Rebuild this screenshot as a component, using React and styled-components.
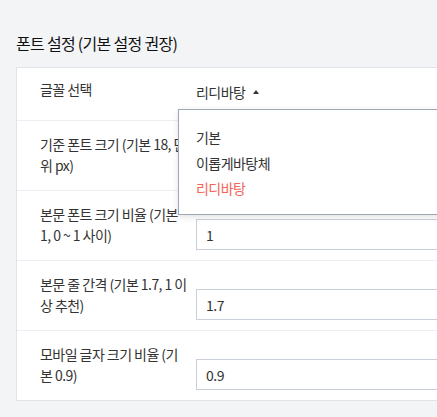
import styled, { createGlobalStyle } from "styled-components";

const GlobalStyle = createGlobalStyle`
  html, body {
    margin: 0;
    padding: 0;
    overflow: hidden;
    background: #f3f4f6;
  }
  body {
    font-family: "Noto Sans CJK KR", "Noto Sans", sans-serif;
    color: #333;
  }
`;

const Page = styled.div`
  padding: 31px 0 0 16px;
  min-height: 417px;
  box-sizing: border-box;
`;

const Title = styled.h2`
  margin: 0 0 12px;
  font-size: 16px;
  line-height: 24px;
  font-weight: 400;
  letter-spacing: -0.7px;
  color: #111;
`;

const Card = styled.div`
  width: 640px;
  background: #fff;
  border: 1px solid #dfe3ea;
`;

const Row = styled.div`
  display: grid;
  grid-template-columns: 150px 1fr;
  column-gap: 6px;
  align-items: start;
  padding: ${(p) => (p.$single ? "11px 0 17px 23px" : "13px 0 10px 23px")};
  border-bottom: 1px solid #eceff3;

  &:last-child {
    border-bottom: none;
  }
`;

const Label = styled.div`
  font-size: 14px;
  line-height: 20.5px;
  letter-spacing: -0.55px;
  word-break: break-all;
  color: #333;
`;

const SelectWrap = styled.div`
  position: relative;
`;

const Trigger = styled.div`
  display: inline-flex;
  align-items: center;
  gap: 8px;
  font-size: 14px;
  line-height: 22px;
  letter-spacing: -0.55px;
  color: #333;
  cursor: pointer;
`;

const Caret = styled.span`
  width: 0;
  height: 0;
  border-left: 3.5px solid transparent;
  border-right: 3.5px solid transparent;
  border-bottom: 4px solid #333;
`;

const Menu = styled.ul`
  position: absolute;
  top: calc(100% + 6px);
  left: -18px;
  width: 320px;
  margin: 0;
  padding: 15px 0 12px;
  list-style: none;
  background: #fff;
  border: 1px solid #9ea7b4;
  box-shadow: 0 2px 6px rgba(0, 0, 0, 0.12);
  z-index: 10;
`;

const Option = styled.li`
  padding-left: 17px;
  font-size: 14px;
  line-height: 25.5px;
  letter-spacing: -0.55px;
  color: ${(p) => (p.$active ? "#f2655a" : "#333")};
`;

const Input = styled.input`
  display: block;
  box-sizing: border-box;
  width: 100%;
  height: 31px;
  margin-top: 15px;
  padding: 0 9px;
  border: 1px solid #c9d0da;
  font-family: inherit;
  font-size: 14px;
  letter-spacing: -0.5px;
  color: #333;
  background: #fff;
  outline: none;
`;

const fonts = ["기본", "이롭게바탕체", "리디바탕"];

const fields = [
  { label: "기준 폰트 크기 (기본 18, 단위 px)", value: "18" },
  { label: "본문 폰트 크기 비율 (기본 1, 0 ~ 1 사이)", value: "1" },
  { label: "본문 줄 간격 (기본 1.7, 1 이상 추천)", value: "1.7" },
  { label: "모바일 글자 크기 비율 (기본 0.9)", value: "0.9" },
];

export default function App() {
  const selected = "리디바탕";

  return (
    <Page>
      <GlobalStyle />
      <Title>폰트 설정 (기본 설정 권장)</Title>
      <Card>
        <Row $single>
          <Label>글꼴 선택</Label>
          <SelectWrap>
            <Trigger>
              {selected}
              <Caret />
            </Trigger>
            <Menu>
              {fonts.map((f) => (
                <Option key={f} $active={f === selected}>
                  {f}
                </Option>
              ))}
            </Menu>
          </SelectWrap>
        </Row>
        {fields.map((f) => (
          <Row key={f.label}>
            <Label>{f.label}</Label>
            <Input defaultValue={f.value} />
          </Row>
        ))}
      </Card>
    </Page>
  );
}
